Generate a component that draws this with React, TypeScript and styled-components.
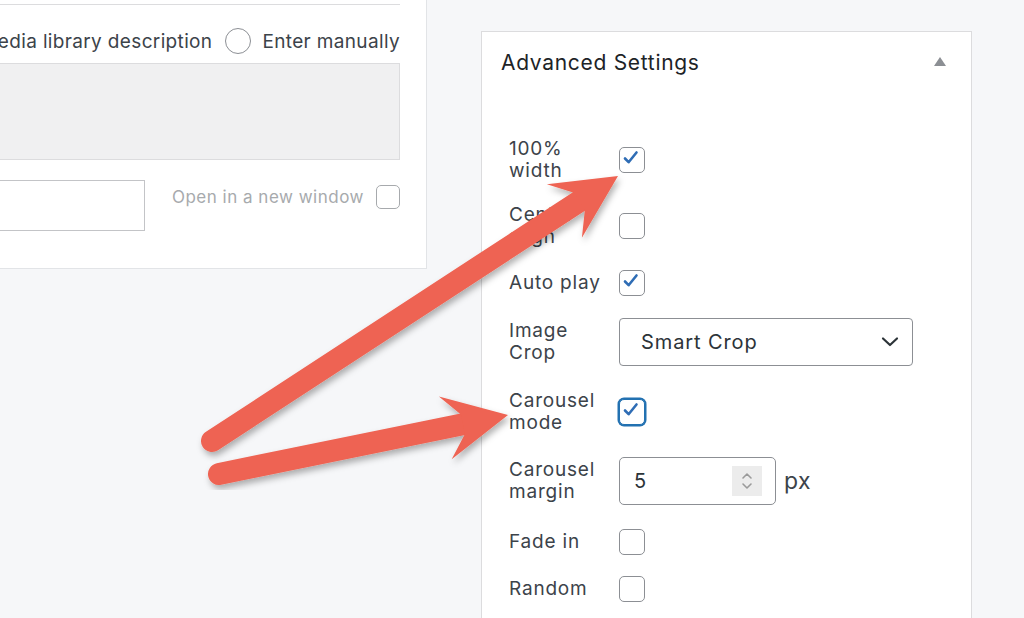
import React from "react";
import styled, { createGlobalStyle } from "styled-components";

const Global = createGlobalStyle`
  html, body { margin: 0; padding: 0; }
  body { background: #f6f7f9; font-family: Inter, "Open Sans", "Liberation Sans", sans-serif; color: #2c3338; }
`;

const Page = styled.div`
  position: relative;
  width: 1024px;
  height: 618px;
  overflow: hidden;
  display: flex;
  align-items: flex-start;
  background: #f6f7f9;
`;

const LeftClip = styled.div`
  width: 427px;
  flex: none;
  overflow: hidden;
`;

const LeftPanel = styled.div`
  width: 727px;
  margin-left: -300px;
  height: 269px;
  box-sizing: border-box;
  background: #fff;
  border-right: 1px solid #e2e4e7;
  border-bottom: 1px solid #e2e4e7;
  padding: 4px 26px 0 0;
  display: flex;
  flex-direction: column;
  align-items: stretch;
`;

const Divider = styled.div`
  height: 1px;
  background: #dcdcde;
`;

const RadioRow = styled.div`
  margin-top: 23px;
  height: 26px;
  display: flex;
  align-items: center;
  justify-content: flex-end;
  gap: 11px;
  font-size: 19px;
  letter-spacing: 0.35px;
  color: #3c434a;
  white-space: nowrap;
`;

const RadioText = styled.span`
  margin-right: 2px;
`;

const Radio = styled.span`
  width: 24px;
  height: 24px;
  border-radius: 50%;
  border: 1px solid #8c8f94;
  background: #fff;
  flex: none;
`;

const TextArea = styled.div`
  margin-top: 9px;
  height: 97px;
  box-sizing: border-box;
  background: #f0f0f1;
  border: 1px solid #dcdcde;
`;

const LinkRow = styled.div`
  margin-top: 20px;
  display: flex;
  align-items: flex-start;
`;

const TextInput = styled.div`
  flex: 1;
  height: 51px;
  box-sizing: border-box;
  border: 1px solid #c3c4c7;
  background: #fff;
`;

const NewWindow = styled.label`
  margin-left: 27px;
  margin-top: 5px;
  display: flex;
  align-items: center;
  gap: 12px;
  font-size: 17px;
  letter-spacing: 0.5px;
  color: #a7aaad;
  white-space: nowrap;
  height: 24px;
`;

const SmallBox = styled.span`
  width: 24px;
  height: 24px;
  box-sizing: border-box;
  border: 1px solid #a7aaad;
  border-radius: 5px;
  background: #fff;
`;

const RightPanel = styled.section`
  margin-left: 54px;
  margin-top: 31px;
  width: 491px;
  height: 620px;
  box-sizing: border-box;
  background: #fff;
  border: 1px solid #dcdcde;
  border-bottom: none;
  flex: none;
`;

const Header = styled.header`
  height: 61px;
  display: flex;
  align-items: center;
  justify-content: space-between;
  padding: 0 25px 0 19px;
`;

const Title = styled.h2`
  margin: 0;
  font-size: 21px;
  letter-spacing: 0.7px;
  font-weight: 400;
  color: #1d2327;
`;

const Toggle = styled.span`
  width: 0;
  height: 0;
  border-left: 6px solid transparent;
  border-right: 6px solid transparent;
  border-bottom: 9px solid #8c8f94;
  margin-top: -2px;
`;

const Body = styled.div`
  padding: 34px 0 0 27px;
  display: flex;
  flex-direction: column;
`;

const Row = styled.div<{ $top?: number }>`
  display: flex;
  align-items: center;
  padding: ${(p) => p.$top ?? 11}px 0 11px;
`;

const Label = styled.div`
  width: 110px;
  flex: none;
  font-size: 19px;
  letter-spacing: 0.8px;
  line-height: 22px;
  color: #3c434a;
`;

const Box = styled.span<{ $focus?: boolean }>`
  width: 26px;
  height: 26px;
  box-sizing: border-box;
  border-radius: 5px;
  border: 1px solid ${(p) => (p.$focus ? "#2271b1" : "#8c8f94")};
  box-shadow: ${(p) => (p.$focus ? "0 0 0 1.5px #2271b1" : "none")};
  background: #fff;
  display: flex;
  align-items: flex-start;
  justify-content: flex-start;
  flex: none;
`;

const Select = styled.div`
  width: 294px;
  height: 48px;
  box-sizing: border-box;
  border: 1px solid #8c8f94;
  border-radius: 4px;
  display: flex;
  align-items: center;
  justify-content: space-between;
  padding: 0 13px 0 21px;
  font-size: 20px;
  letter-spacing: 0.9px;
  color: #2c3338;
`;

const NumberWrap = styled.div`
  display: flex;
  align-items: center;
  gap: 8px;
`;

const NumberInput = styled.div`
  width: 157px;
  height: 48px;
  box-sizing: border-box;
  border: 1px solid #8c8f94;
  border-radius: 5px;
  display: flex;
  align-items: center;
  justify-content: space-between;
  padding: 0 13px 0 14px;
  font-size: 20px;
  color: #2c3338;
`;

const Spinner = styled.span`
  width: 30px;
  height: 30px;
  background: #ececec;
  display: flex;
  align-items: center;
  justify-content: center;
`;

const Unit = styled.span`
  font-size: 23px;
  letter-spacing: 0.5px;
  color: #3c434a;
`;

const Overlay = styled.svg`
  position: absolute;
  left: 0;
  top: 0;
  pointer-events: none;
`;

const Check = () => (
  <svg width="24" height="24" viewBox="0 0 24 24">
    <polyline points="5,10.5 8.6,14.2 16.5,4.5" fill="none" stroke="#2f6db5" strokeWidth="2.6" strokeLinecap="round" strokeLinejoin="round" />
  </svg>
);

const CheckBox = ({ checked, focus }: { checked?: boolean; focus?: boolean }) => (
  <Box $focus={focus}>{checked ? <Check /> : null}</Box>
);

type P = [number, number];

function arrow(tail: P, tip: P, t = 22, L = 64, w = 32) {
  const dx = tip[0] - tail[0];
  const dy = tip[1] - tail[1];
  const len = Math.hypot(dx, dy);
  const u: P = [dx / len, dy / len];
  const v: P = [-u[1], u[0]];
  const at = (a: number, b: number): P => [tip[0] + u[0] * a + v[0] * b, tip[1] + u[1] * a + v[1] * b];
  const shaftEnd = at(-0.7 * L, 0);
  const pts = [at(0, 0), at(-L, -w), at(-0.72 * L, -t / 2 + 1), at(-0.72 * L, t / 2 - 1), at(-L, w)]
    .map((p) => p.map((n) => n.toFixed(1)).join(","))
    .join(" ");
  return { shaftEnd, pts };
}

const Arrow = ({ tail, tip }: { tail: P; tip: P }) => {
  const a = arrow(tail, tip);
  return (
    <g filter="url(#shadow)">
      <line x1={tail[0]} y1={tail[1]} x2={a.shaftEnd[0]} y2={a.shaftEnd[1]} stroke="#ee6352" strokeWidth="22" strokeLinecap="round" />
      <polygon points={a.pts} fill="#ee6352" />
    </g>
  );
};

export default function App() {
  return (
    <>
      <Global />
      <Page>
        <LeftClip>
          <LeftPanel>
            <Divider />
            <RadioRow>
              <Radio />
              <RadioText>Use media library description</RadioText>
              <Radio />
              <span>Enter manually</span>
            </RadioRow>
            <TextArea />
            <LinkRow>
              <TextInput />
              <NewWindow>
                Open in a new window
                <SmallBox />
              </NewWindow>
            </LinkRow>
          </LeftPanel>
        </LeftClip>
        <RightPanel>
          <Header>
            <Title>Advanced Settings</Title>
            <Toggle />
          </Header>
          <Body>
            <Row>
              <Label>100%<br />width</Label>
              <CheckBox checked />
            </Row>
            <Row>
              <Label>Center<br />align</Label>
              <CheckBox />
            </Row>
            <Row>
              <Label>Auto play</Label>
              <CheckBox checked />
            </Row>
            <Row>
              <Label>Image<br />Crop</Label>
              <Select>
                <span>Smart Crop</span>
                <svg width="18" height="12" viewBox="0 0 18 12">
                  <polyline points="2,2.5 9,9 16,2.5" fill="none" stroke="#2c3338" strokeWidth="2.2" strokeLinecap="round" strokeLinejoin="round" />
                </svg>
              </Select>
            </Row>
            <Row $top={13}>
              <Label>Carousel<br />mode</Label>
              <CheckBox checked focus />
            </Row>
            <Row $top={12}>
              <Label>Carousel<br />margin</Label>
              <NumberWrap>
                <NumberInput>
                  <span>5</span>
                  <Spinner>
                    <svg width="14" height="22" viewBox="0 0 14 22">
                      <polyline points="3,8 7,4 11,8" fill="none" stroke="#9a9a9a" strokeWidth="1.6" strokeLinecap="round" strokeLinejoin="round" />
                      <polyline points="3,14 7,18 11,14" fill="none" stroke="#9a9a9a" strokeWidth="1.6" strokeLinecap="round" strokeLinejoin="round" />
                    </svg>
                  </Spinner>
                </NumberInput>
                <Unit>px</Unit>
              </NumberWrap>
            </Row>
            <Row $top={13}>
              <Label>Fade in</Label>
              <CheckBox />
            </Row>
            <Row $top={10}>
              <Label>Random</Label>
              <CheckBox />
            </Row>
          </Body>
        </RightPanel>
        <Overlay width="1024" height="618" viewBox="0 0 1024 618">
          <defs>
            <filter id="shadow" x="-10%" y="-10%" width="130%" height="130%">
              <feDropShadow dx="2" dy="4" stdDeviation="3" floodColor="#000" floodOpacity="0.3" />
            </filter>
          </defs>
          <Arrow tail={[212, 441]} tip={[618, 176]} />
          <Arrow tail={[219, 474]} tip={[508, 415]} />
        </Overlay>
      </Page>
    </>
  );
}
